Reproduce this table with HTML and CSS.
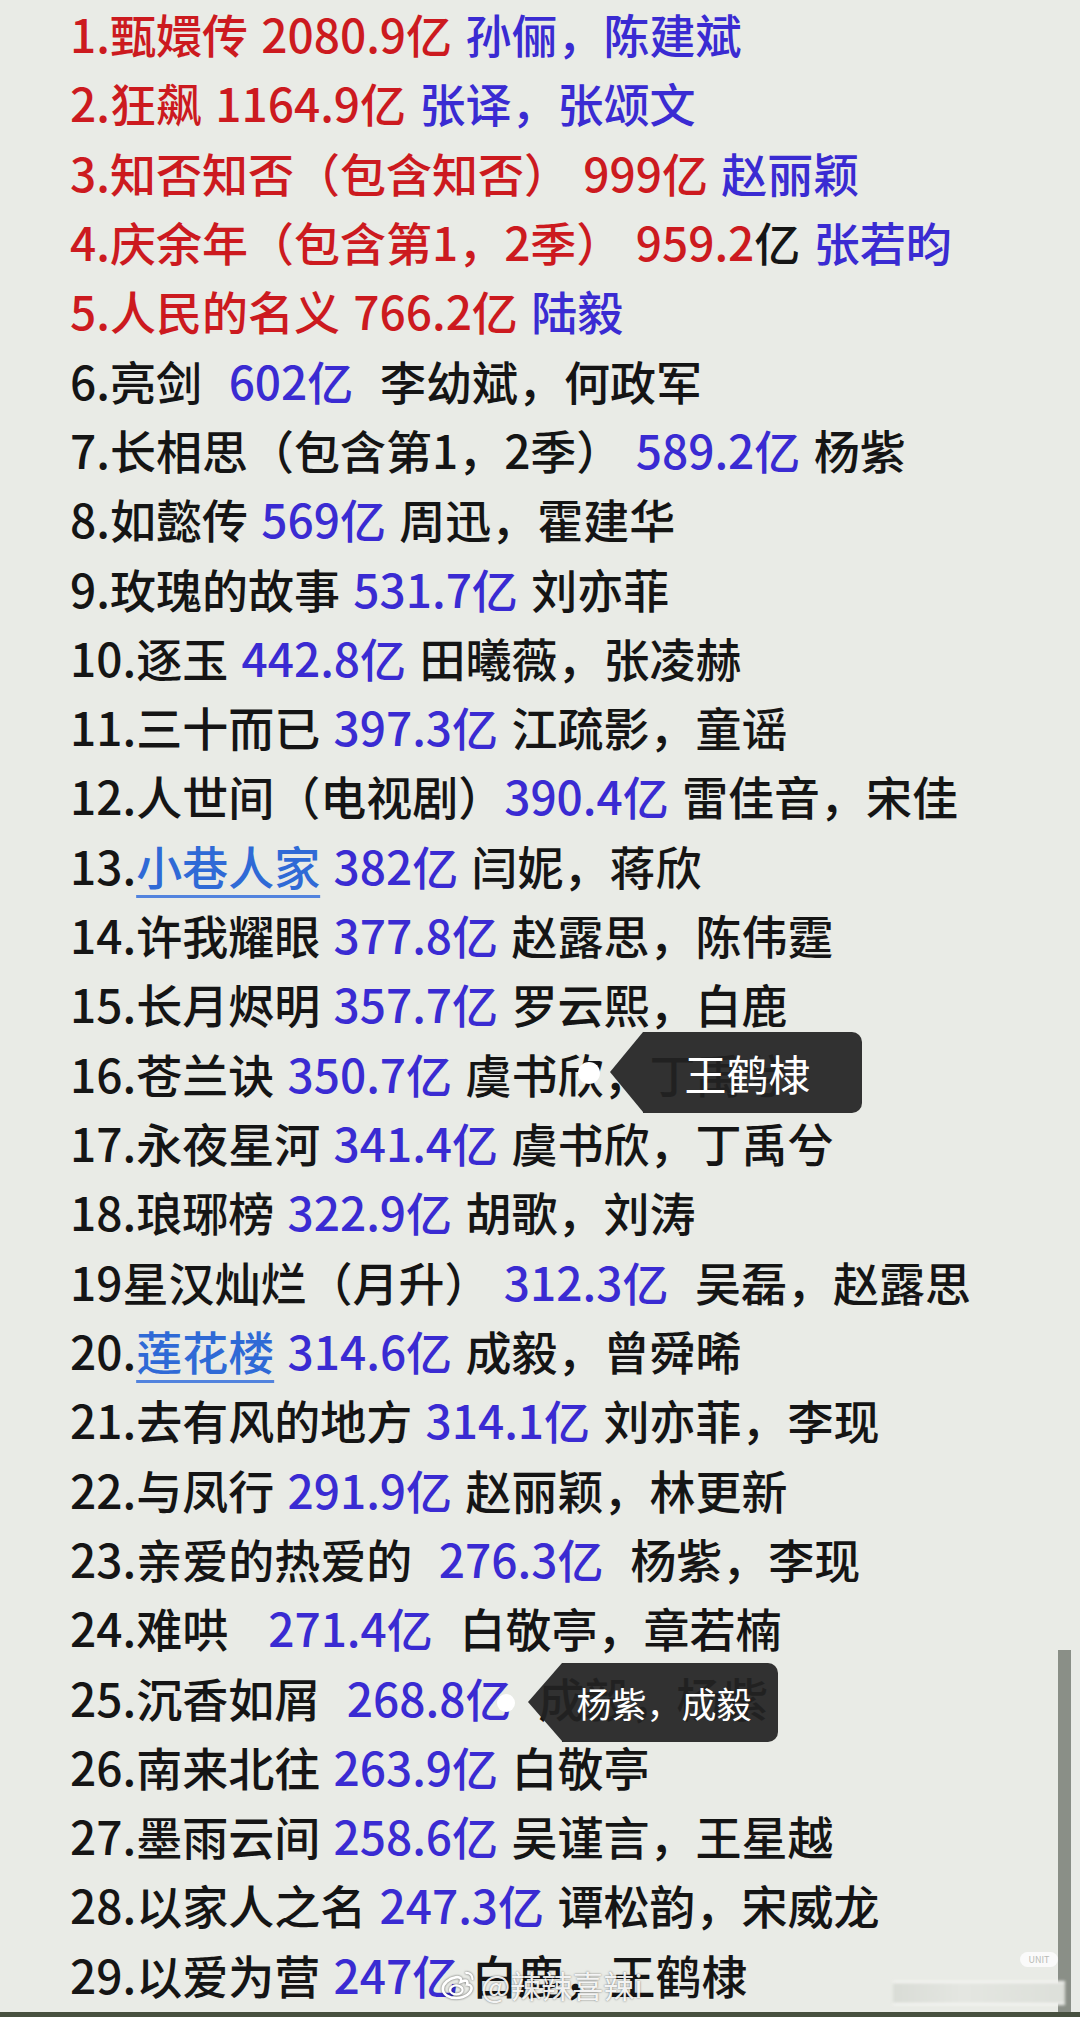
FILE: index.html
```html
<!DOCTYPE html>
<html lang="zh-CN">
<head>
    <meta charset="UTF-8">
    <meta name="viewport" content="width=device-width, initial-scale=1.0">
    <title>电视剧热度榜</title>
    <link rel="stylesheet" href="styles.css">
</head>
<body>
    <div class="page">
        <div class="list">
            <p class="row red">1.甄嬛传 2080.9亿 <span class="blue">孙俪，陈建斌</span></p>
            <p class="row red">2.狂飙 1164.9亿 <span class="blue">张译，张颂文</span></p>
            <p class="row red">3.知否知否（包含知否） 999亿 <span class="blue">赵丽颖</span></p>
            <p class="row red">4.庆余年（包含第1，2季） 959.2<span class="dark">亿</span> <span class="blue">张若昀</span></p>
            <p class="row red">5.人民的名义 766.2亿 <span class="blue">陆毅</span></p>
            <p class="row">6.亮剑  <span class="blue">602亿</span>  李幼斌，何政军</p>
            <p class="row">7.长相思（包含第1，2季） <span class="blue">589.2亿</span> 杨紫</p>
            <p class="row">8.如懿传 <span class="blue">569亿</span> 周迅，霍建华</p>
            <p class="row">9.玫瑰的故事 <span class="blue">531.7亿</span> 刘亦菲</p>
            <p class="row">10.逐玉 <span class="blue">442.8亿</span> 田曦薇，张凌赫</p>
            <p class="row">11.三十而已 <span class="blue">397.3亿</span> 江疏影，童谣</p>
            <p class="row">12.人世间（电视剧）<span class="blue">390.4亿</span> 雷佳音，宋佳</p>
            <p class="row">13.<a class="link" href="#">小巷人家</a> <span class="blue">382亿</span> 闫妮，蒋欣</p>
            <p class="row">14.许我耀眼 <span class="blue">377.8亿</span> 赵露思，陈伟霆</p>
            <p class="row">15.长月烬明 <span class="blue">357.7亿</span> 罗云熙，白鹿</p>
            <p class="row">16.苍兰诀 <span class="blue">350.7亿</span> 虞书欣，丁禹兮</p>
            <p class="row">17.永夜星河 <span class="blue">341.4亿</span> 虞书欣，丁禹兮</p>
            <p class="row">18.琅琊榜 <span class="blue">322.9亿</span> 胡歌，刘涛</p>
            <p class="row">19星汉灿烂（月升） <span class="blue">312.3亿</span>  吴磊，赵露思</p>
            <p class="row">20.<a class="link" href="#">莲花楼</a> <span class="blue">314.6亿</span> 成毅，曾舜晞</p>
            <p class="row">21.去有风的地方 <span class="blue">314.1亿</span> 刘亦菲，李现</p>
            <p class="row">22.与凤行 <span class="blue">291.9亿</span> 赵丽颖，林更新</p>
            <p class="row">23.亲爱的热爱的  <span class="blue">276.3亿</span>  杨紫，李现</p>
            <p class="row">24.难哄   <span class="blue">271.4亿</span>  白敬亭，章若楠</p>
            <p class="row">25.沉香如屑  <span class="blue">268.8亿</span>  成毅，杨紫</p>
            <p class="row">26.南来北往 <span class="blue">263.9亿</span> 白敬亭</p>
            <p class="row">27.墨雨云间 <span class="blue">258.6亿</span> 吴谨言，王星越</p>
            <p class="row">28.以家人之名 <span class="blue">247.3亿</span> 谭松韵，宋威龙</p>
            <p class="row">29.以爱为营 <span class="blue">247亿</span> 白鹿，王鹤棣</p>
        </div>

        <!-- 弹幕气泡 -->
        <span class="dot dot-one"></span>
        <div class="bubble bubble-one">王鹤棣</div>
        <span class="dot dot-two"></span>
        <div class="bubble bubble-two">杨紫，成毅</div>

        <div class="scrollbar"></div>
        <span class="badge">UNIT</span>
        <div class="blur-box"></div>

        <div class="watermark">
            <svg class="weibo" viewBox="0 0 40 34" width="36" height="31">
                <path d="M16 9c-7 1-14 7-14 13 0 6 7 10 15 10 10 0 17-6 17-11 0-3-3-4-5-4 1-3 0-5-4-4l-3 1c1-3 0-6-6-5z" fill="none" stroke="#fff" stroke-width="3"/>
                <ellipse cx="17" cy="23" rx="7" ry="5" fill="none" stroke="#fff" stroke-width="2.5"/>
                <path d="M28 4c4 0 7 3 7 7" fill="none" stroke="#fff" stroke-width="2.5" stroke-linecap="round"/>
            </svg>
            <span>@辣辣喜辣i</span>
        </div>
    </div>
</body>
</html>
```

FILE: styles.css
```css
body {
    margin: 0;
    background-color: #e9ebe6;
    font-family: "Noto Sans CJK SC", "Noto Sans", sans-serif;
}

.page {
    position: relative;
    width: 1080px;
    height: 2017px;
    overflow: hidden;
    border-bottom: 5px solid #47503f;
    box-sizing: border-box;
}

.list {
    padding: 0 0 0 70px;
    margin-top: -1px;
}

.row {
    margin: 0;
    height: 69.32px;
    line-height: 69.32px;
    font-size: 46px;
    font-weight: 500;
    color: #151515;
    white-space: pre;
    word-spacing: 3px;
}

.red {
    color: #cc1a1f;
}

.blue {
    color: #3a2bd2;
}

.dark {
    color: #151515;
}

.link {
    color: #2f6ad6;
    text-decoration: underline;
    text-decoration-color: #5283de;
    text-decoration-thickness: 3px;
    text-underline-offset: 10px;
}

.dot {
    position: absolute;
    border-radius: 50%;
    background: #fff;
}

.dot-one {
    left: 578px;
    top: 1062px;
    width: 22px;
    height: 22px;
}

.dot-two {
    left: 497px;
    top: 1694px;
    width: 18px;
    height: 18px;
}

.bubble {
    position: absolute;
    background: rgba(34, 34, 34, 0.93);
    color: #fff;
    border-radius: 0 10px 10px 0;
    box-sizing: border-box;
    text-align: center;
}

.bubble::before {
    content: "";
    position: absolute;
    top: 0;
    right: 100%;
    border-style: solid;
    border-color: transparent rgba(34, 34, 34, 0.93) transparent transparent;
}

.bubble-one {
    left: 643px;
    top: 1032px;
    width: 219px;
    height: 81px;
    line-height: 81px;
    font-size: 42px;
    padding-right: 10px;
}

.bubble-one::before {
    border-width: 40.5px 33px 40.5px 0;
}

.bubble-two {
    left: 562px;
    top: 1663px;
    width: 216px;
    height: 79px;
    line-height: 79px;
    font-size: 35px;
    padding-right: 12px;
}

.bubble-two::before {
    border-width: 39.5px 34px 39.5px 0;
}

.scrollbar {
    position: absolute;
    left: 1058px;
    top: 1650px;
    width: 13px;
    height: 370px;
    background: #8a8f87;
}

.badge {
    position: absolute;
    left: 1020px;
    top: 1952px;
    width: 38px;
    height: 15px;
    border-radius: 8px;
    background: #fafafa;
    color: #b8bbb5;
    font-size: 9px;
    line-height: 15px;
    text-align: center;
}

.blur-box {
    position: absolute;
    left: 893px;
    top: 1981px;
    width: 172px;
    height: 20px;
    border-top: 2px solid #f7f7f5;
    border-bottom: 2px solid #f7f7f5;
    background: linear-gradient(90deg, #d9dcd6, #e4e6e1 40%, #dcdfd9);
    filter: blur(1.5px);
}

.watermark {
    position: absolute;
    left: 441px;
    top: 1962px;
    display: flex;
    align-items: center;
    gap: 4px;
    color: rgba(255, 255, 255, 0.92);
    font-size: 31px;
    text-shadow: 0 0 2px rgba(0, 0, 0, 0.55);
}

.weibo {
    filter: drop-shadow(0 0 1px rgba(0, 0, 0, 0.6));
}
```
